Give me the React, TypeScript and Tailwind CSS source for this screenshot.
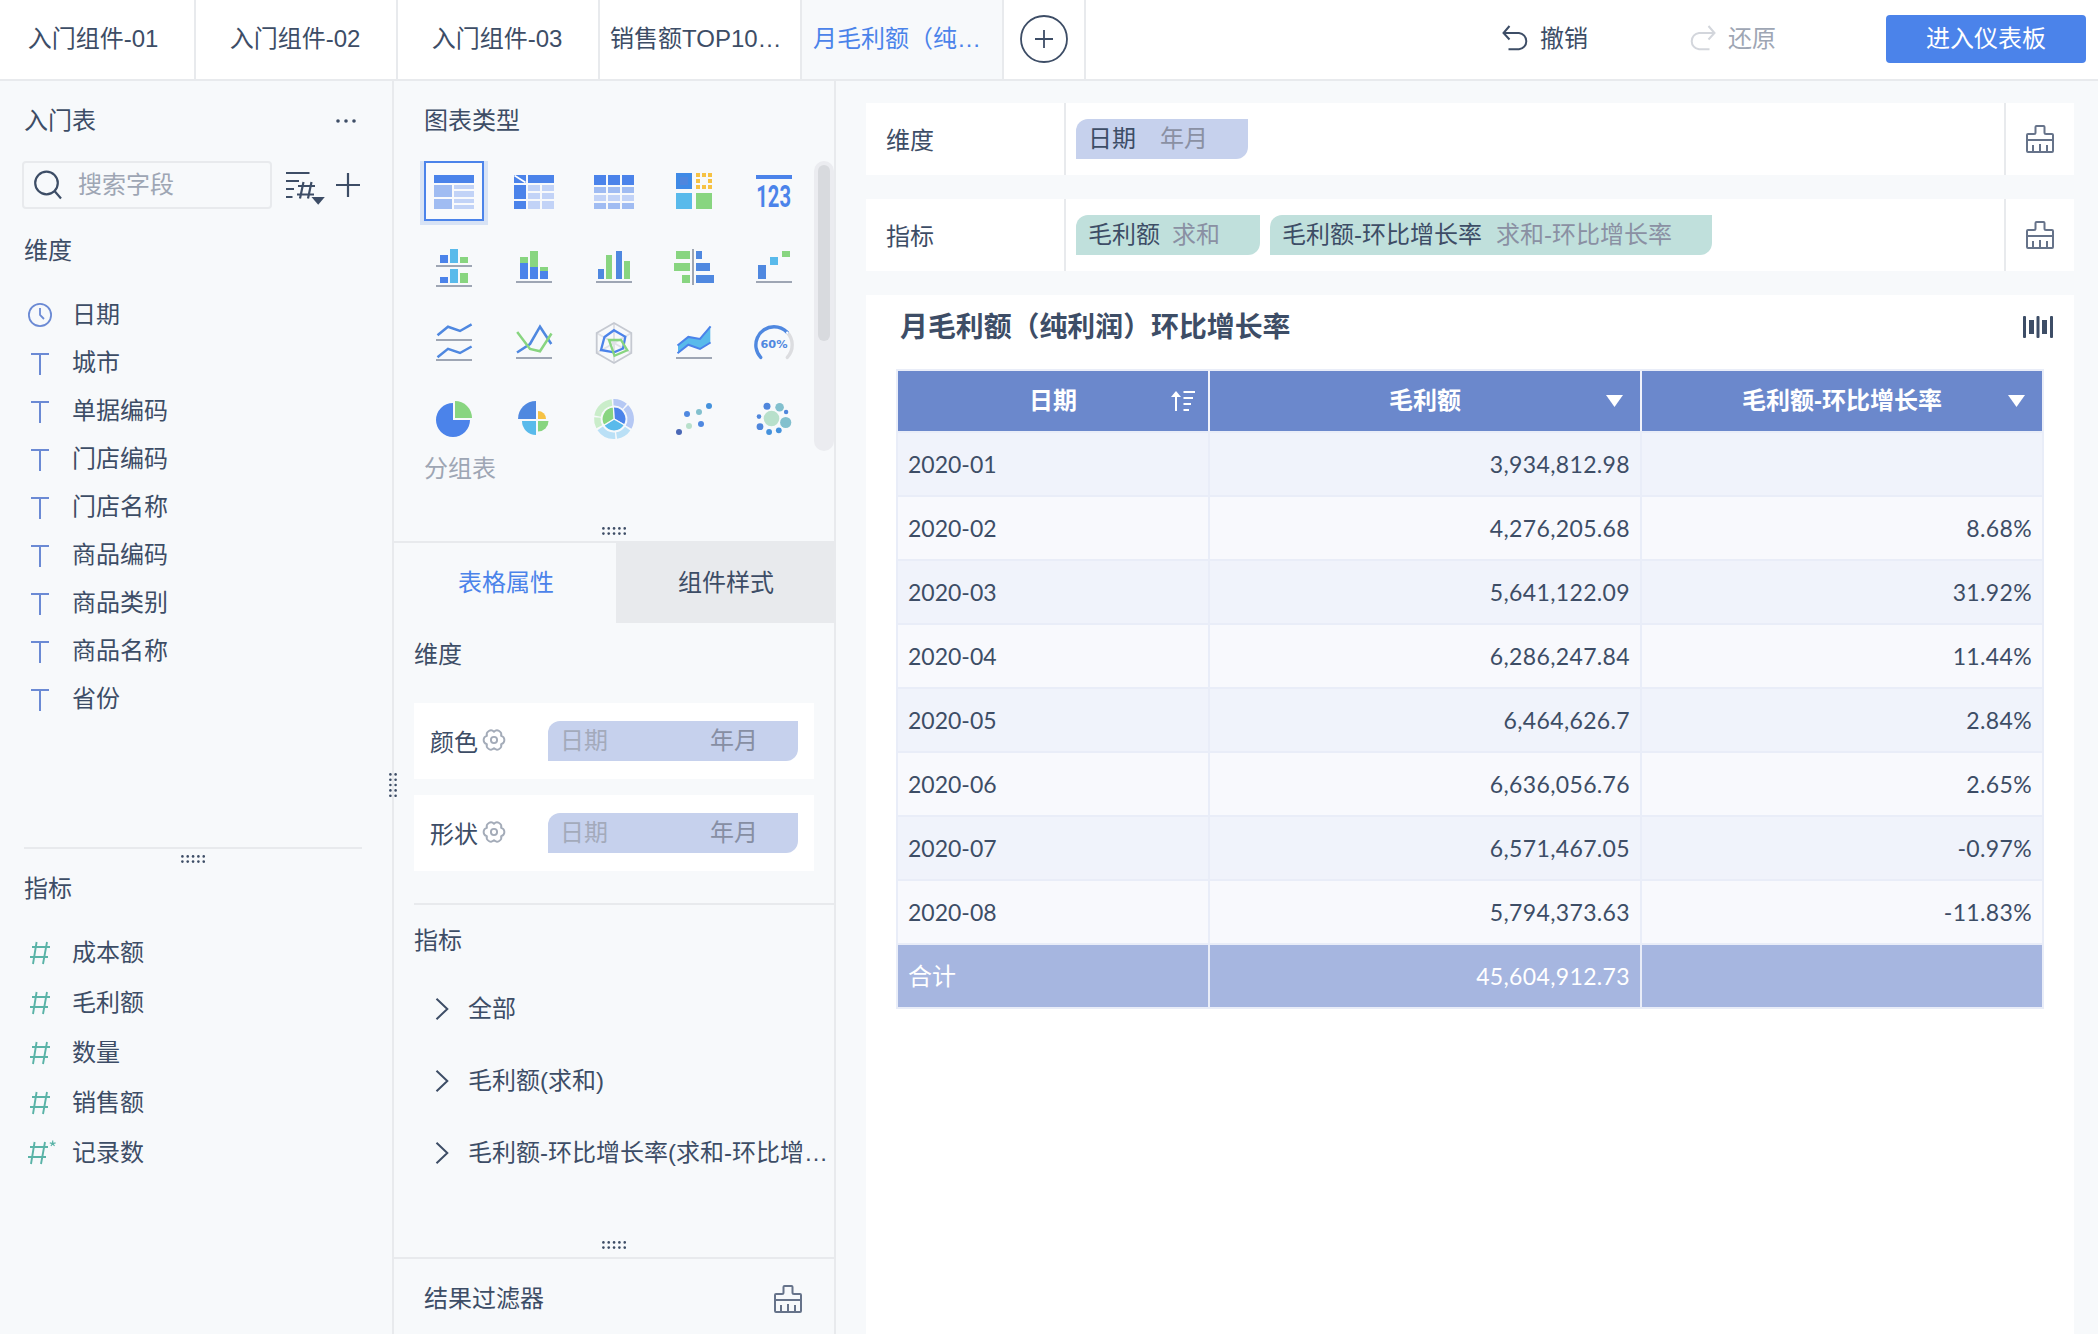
import React from "react";

const BLUE = "#4b83ea";
const MID = "#4f88e0";
const GREEN = "#88d580";
const SKY = "#59baeb";
const AXIS = "#9ea6b4";

type Box = [number, number, number, number, string];

function Boxes({ items }: { items: Box[] }) {
  return (
    <>
      {items.map(([x1, y1, x2, y2, fill], i) => (
        <rect key={i} x={x1} y={y1} width={x2 - x1} height={y2 - y1} fill={fill} />
      ))}
    </>
  );
}

function polar(r: number, deg: number) {
  const a = ((deg - 90) * Math.PI) / 180;
  return `${(30 + r * Math.cos(a)).toFixed(2)} ${(30 + r * Math.sin(a)).toFixed(2)}`;
}
const arc = (r: number, a: number, b: number) => `M${polar(r, a)}A${r} ${r} 0 0 1 ${polar(r, b)}`;
const wedge = (r: number, a: number, b: number) => `${arc(r, a, b)}L30 30Z`;

const L1 = "#a0bcf2";
const L2 = "#c2d3f7";

const chartIcons: React.ReactNode[] = [
  <Boxes
    items={[
      [10, 14, 50, 22, BLUE], [10, 24, 28, 36, L1], [10, 38, 28, 48, L1],
      [30, 24, 50, 28, L2], [30, 30, 50, 36, L2], [30, 38, 50, 42, L2], [30, 44, 50, 48, L2],
    ]}
  />,
  <>
    <Boxes
      items={[
        [10, 14, 22, 22, BLUE], [24, 14, 50, 22, BLUE], [10, 24, 22, 38, BLUE], [10, 40, 22, 48, BLUE],
        [24, 24, 36, 30, L2], [38, 24, 50, 30, L2], [24, 32, 36, 38, L2], [38, 32, 50, 38, L2],
        [24, 40, 36, 48, L2], [38, 40, 50, 48, L2],
      ]}
    />
    <path d="M10.5 14.5L21.5 21.5" stroke="#fff" strokeWidth="1.6" />
  </>,
  <Boxes
    items={[10, 24, 38].flatMap((x): Box[] => [
      [x, 14, x + 12, 24, BLUE], [x, 26, x + 12, 32, L1], [x, 34, x + 12, 40, L2], [x, 42, x + 12, 48, L1],
    ])}
  />,
  <Boxes
    items={[
      [12, 12, 28, 28, "#3f8ae6"], [16, 16, 24, 24, "#4f86de"], [12, 32, 28, 48, SKY], [32, 32, 48, 48, GREEN],
      [32, 12, 36, 16, "#f6c244"], [38, 12, 42, 16, "#f6c244"], [44, 12, 48, 16, "#f6c244"],
      [32, 18, 36, 22, "#f6c244"], [44, 18, 48, 22, "#f6c244"],
      [32, 24, 36, 28, "#f6c244"], [38, 24, 42, 28, "#f6c244"], [44, 24, 48, 28, "#f6c244"],
    ]}
  />,
  <>
    <Boxes items={[[12, 14, 48, 18, BLUE]]} />
    <text transform="translate(12.3 46) scale(0.65 1)" fontFamily="Roboto, sans-serif" fontWeight="700" fontSize="31" fill={BLUE}>
      123
    </text>
  </>,
  <Boxes
    items={[
      [16, 18, 24, 26, BLUE], [26, 12, 34, 26, SKY], [36, 20, 44, 26, GREEN], [12, 28, 48, 30, AXIS],
      [16, 40, 24, 46, BLUE], [26, 32, 34, 46, SKY], [36, 36, 44, 46, GREEN], [12, 48, 48, 50, AXIS],
    ]}
  />,
  <Boxes
    items={[
      [16, 20, 24, 26, GREEN], [16, 26, 24, 42, BLUE], [26, 14, 34, 30, GREEN], [26, 30, 34, 42, BLUE],
      [36, 30, 44, 34, GREEN], [36, 34, 44, 42, BLUE], [12, 44, 48, 46, AXIS],
    ]}
  />,
  <Boxes
    items={[
      [14, 32, 20, 42, MID], [22, 18, 28, 42, GREEN], [32, 14, 38, 42, MID], [40, 24, 46, 42, GREEN], [12, 44, 48, 46, AXIS],
    ]}
  />,
  <Boxes
    items={[
      [12, 14, 26, 22, GREEN], [10, 26, 26, 34, GREEN], [18, 38, 26, 46, GREEN], [28, 12, 30, 48, AXIS],
      [32, 14, 38, 22, MID], [32, 26, 46, 34, MID], [32, 38, 50, 46, MID],
    ]}
  />,
  <Boxes items={[[14, 28, 22, 42, MID], [26, 20, 34, 28, SKY], [38, 14, 46, 20, GREEN], [12, 44, 48, 46, AXIS]]} />,
  <>
    <g fill="none" stroke={MID} strokeWidth="2.5">
      <path d="M13.5 22.2L24 13.7L36 18L47.6 11.3" />
      <path d="M13.5 44.2L24 35.8L36 40L47.6 33.5" />
    </g>
    <Boxes items={[[12, 26, 48, 28, AXIS], [12, 46, 48, 48, AXIS]]} />
  </>,
  <>
    <g fill="none" strokeWidth="2.5">
      <path d="M13 39.5L26 31L36 13.7L47.3 31" stroke={MID} />
      <path d="M13.2 19L26 36L36 38.3L47.5 20.5" stroke={GREEN} />
    </g>
    <Boxes items={[[12, 44, 48, 46, AXIS]]} />
  </>,
  <g fill="none">
    <path d="M30 10V50M12.7 20L47.3 40M47.3 20L12.7 40" stroke="#dfe1e6" strokeWidth="2" />
    <path d="M30 10L47.3 20V40L30 50L12.7 40V20Z" stroke="#c5c9d1" strokeWidth="1.8" />
    <path d="M30 17.2L41.3 23.8L39 35.5L30 39.3L17 37L20.5 24Z" stroke={BLUE} strokeWidth="2.3" />
    <path d="M25 27H37L43.3 37.3L30.5 42.7Z" stroke={GREEN} strokeWidth="2.3" />
  </g>,
  <>
    <path d="M14 32L24.3 23.7L36 26L46.3 14V29.7L36 36L24.3 31.7L14 40Z" fill={SKY} />
    <path d="M13.5 32.5L24.3 23.9L36 26L46.6 13.3M13.5 40.3L24.3 31.7L36 36L46.6 29.5" fill="none" stroke={BLUE} strokeWidth="2" />
    <Boxes items={[[12, 44, 48, 46, AXIS]]} />
  </>,
  <>
    <path d="M43.1 19.3A18.3 18.3 0 0 1 43.3 44.4" fill="none" stroke="#dcdde0" strokeWidth="3.4" strokeLinecap="round" />
    <path d="M16.7 44.4A18.3 18.3 0 0 1 30 13.7A18.3 18.3 0 0 1 43.1 19.3" fill="none" stroke={MID} strokeWidth="3.4" strokeLinecap="round" />
    <circle cx="43.3" cy="19.8" r="1.3" fill="#fff" />
    <text x="30" y="35.2" textAnchor="middle" fontFamily="'DejaVu Sans', sans-serif" fontWeight="700" fontSize="10.5" fill={MID} textLength="27" lengthAdjust="spacingAndGlyphs">
      60%
    </text>
  </>,
  <>
    <path d="M29 14A17 17 0 1 0 46 31H29Z" fill={BLUE} />
    <path d="M31 12A17 17 0 0 1 48 29H31Z" fill={GREEN} />
  </>,
  <>
    <path d="M32 12A18 18 0 0 0 14 30H32Z" fill={MID} />
    <path d="M34 22A8 8 0 0 1 42 30H34Z" fill="#f6c244" />
    <path d="M32 46A14 14 0 0 1 18 32H32Z" fill={SKY} />
    <path d="M34 42.5A10.5 10.5 0 0 0 44.5 32H34Z" fill={GREEN} />
  </>,
  <>
    <g fill="none" strokeWidth="6.5">
      <path d={arc(16.7, -2, 40)} stroke="#b5c8f4" />
      <path d={arc(16.7, 45, 119)} stroke="#b5c8f4" />
      <path d={arc(16.7, 125, 171)} stroke="#bae0f6" />
      <path d={arc(16.7, 176, 236)} stroke="#bae0f6" />
      <path d={arc(16.7, 242, 275)} stroke="#caedca" />
      <path d={arc(16.7, 280, 353)} stroke="#caedca" />
    </g>
    <g stroke="#f7f9fb" strokeWidth="1.2">
      <path d={wedge(12, -3, 120)} fill={BLUE} />
      <path d={wedge(12, 120, 238)} fill={SKY} />
      <path d={wedge(12, 238, 357)} fill={GREEN} />
    </g>
  </>,
  <>
    <circle cx="15" cy="43" r="3" fill="#4a68b6" />
    <circle cx="25" cy="37" r="3" fill="#b8e0cb" />
    <circle cx="23" cy="25" r="3" fill={MID} />
    <circle cx="35" cy="23" r="3" fill="#82c0ce" />
    <circle cx="37" cy="35" r="3" fill={MID} />
    <circle cx="45" cy="17" r="3" fill="#4592dc" />
  </>,
  <>
    <circle cx="27.5" cy="29.5" r="7.8" fill="#b8e0cb" />
    <circle cx="41.7" cy="33.5" r="5.6" fill="#82c0ce" />
    <circle cx="35.6" cy="18.3" r="4.3" fill="#82c0ce" />
    <circle cx="23" cy="17.3" r="3.5" fill="#4f86dc" />
    <circle cx="42.1" cy="23" r="2.2" fill="#4f86dc" />
    <circle cx="15" cy="27.6" r="2.3" fill="#4f86dc" />
    <circle cx="16" cy="37.7" r="3.4" fill="#4f86dc" />
    <circle cx="25.1" cy="43" r="2.9" fill="#4592dc" />
    <circle cx="34.8" cy="41.3" r="2.9" fill="#4592dc" />
  </>,
];

function Brush() {
  return (
    <svg width="28" height="28" viewBox="0 0 28 28" fill="none" stroke="#66738a" strokeWidth="2" strokeLinejoin="round">
      <path d="M1 10Q1 9 2 9H8Q9.5 9 9.5 7.5V2Q9.5 1 10.5 1H17.5Q18.5 1 18.5 2V7.5Q18.5 9 20 9H26Q27 9 27 10V26Q27 27 26 27H2Q1 27 1 26Z" />
      <path d="M1 15H27M7 20V27M14 19V27M21 20V27" />
    </svg>
  );
}

function Handle({ vertical = false }: { vertical?: boolean }) {
  const w = vertical ? 8 : 24;
  const h = vertical ? 24 : 8;
  return (
    <svg width={w} height={h} viewBox={`0 0 ${w} ${h}`} fill="#3d4d66">
      {[0, 1, 2, 3, 4].flatMap((i) =>
        [0, 1].map((j) => {
          const a = 1.4 + i * 5.33;
          const b = 1.4 + j * 5.2;
          return <circle key={`${i}${j}`} cx={vertical ? b : a} cy={vertical ? a : b} r="1.3" />;
        }),
      )}
    </svg>
  );
}

function Gear() {
  return (
    <svg width="24" height="24" viewBox="-12 -12 24 24" fill="none" stroke="#a3abb8" strokeWidth="1.9" strokeLinejoin="round">
      <path d="M0 -8.2A4.2 4.2 0 0 1 7.1 -4.1A4.2 4.2 0 0 1 7.1 4.1A4.2 4.2 0 0 1 0 8.2A4.2 4.2 0 0 1 -7.1 4.1A4.2 4.2 0 0 1 -7.1 -4.1A4.2 4.2 0 0 1 0 -8.2Z" />
      <circle r="3.1" />
    </svg>
  );
}

function Hash({ star = false }: { star?: boolean }) {
  return (
    <svg className={star ? "-ml-[2px] mr-[2px]" : ""} width="24" height="24" viewBox="0 0 24 24" overflow="visible" fill="none" stroke="#5ab3a7" strokeWidth="1.9">
      <path d="M8.6 1L5 23M19 1L15 23M4 6H22M2 16H20" />
      {star && <path d="M26.7 -0.6V2.6M23.8 1.8L26.7 2.6L29.6 1.8M24.9 5L26.7 2.6L28.5 5" strokeWidth="1.2" />}
    </svg>
  );
}

const tabs = [
  { label: "入门组件-01", cls: "w-[196px] pr-[8px] justify-center" },
  { label: "入门组件-02", cls: "w-[202px] pr-[2px] justify-center" },
  { label: "入门组件-03", cls: "w-[202px] pr-[2px] justify-center" },
  { label: "销售额TOP10…", cls: "w-[202px] pl-[10px]" },
  { label: "月毛利额（纯…", cls: "w-[202px] pl-[11px] bg-[#f7f9fb] text-[#4b83ea]" },
];

const dims = ["日期", "城市", "单据编码", "门店编码", "门店名称", "商品编码", "商品类别", "商品名称", "省份"];
const measures = ["成本额", "毛利额", "数量", "销售额", "记录数"];
const rows = [
  ["2020-01", "3,934,812.98", ""],
  ["2020-02", "4,276,205.68", "8.68%"],
  ["2020-03", "5,641,122.09", "31.92%"],
  ["2020-04", "6,286,247.84", "11.44%"],
  ["2020-05", "6,464,626.7", "2.84%"],
  ["2020-06", "6,636,056.76", "2.65%"],
  ["2020-07", "6,571,467.05", "-0.97%"],
  ["2020-08", "5,794,373.63", "-11.83%"],
];

function TopBar() {
  return (
    <header className="flex h-[81px] shrink-0 border-b-2 border-[#e8eaed] bg-white">
      {tabs.map((t) => (
        <div key={t.label} className={`flex h-[79px] shrink-0 items-center whitespace-nowrap border-r-2 border-[#e8eaed] pb-[2px] ${t.cls}`}>
          {t.label}
        </div>
      ))}
      <div className="flex w-[82px] items-center justify-center border-r-2 border-[#e8eaed] pb-[1px]">
        <svg width="48" height="48" viewBox="0 0 48 48" fill="none" stroke="#3d4d66" strokeWidth="1.8">
          <circle cx="24" cy="24" r="23" />
          <path d="M15 24H33M24 15V33" />
        </svg>
      </div>
      <div className="ml-auto flex items-center pb-[2px] pr-3">
        <svg className="-mt-[1px]" width="27" height="26" viewBox="0 0 27 26" fill="none" stroke="#3d4d66" strokeWidth="2">
          <path d="M8.5 1L2.5 8L8.5 14.5M2.5 8H18A8.2 8.2 0 0 1 18 24.3H7.5" />
        </svg>
        <span className="ml-[12px]">撤销</span>
        <svg className="-mt-[1px] ml-[101px]" width="27" height="26" viewBox="0 0 27 26" fill="none" stroke="#d3d6dc" strokeWidth="2">
          <path d="M19.5 1L25.5 8L19.5 14.5M25.5 8H10A8.2 8.2 0 0 0 10 24.3H20.5" />
        </svg>
        <span className="ml-[12px] text-[#9ea6b4]">还原</span>
        <button className="ml-[110px] mt-[1px] h-12 w-[200px] rounded bg-[#4b83ea] text-white">进入仪表板</button>
      </div>
    </header>
  );
}

function FieldPanel() {
  return (
    <aside className="relative flex w-[394px] shrink-0 flex-col border-r-2 border-[#e8eaed]">
      <div className="flex h-20 items-center justify-between pl-6 pr-9">
        <span>入门表</span>
        <svg width="20" height="4" viewBox="0 0 20 4" fill="#3d4d66">
          <circle cx="2" cy="2" r="1.8" />
          <circle cx="10" cy="2" r="1.8" />
          <circle cx="18" cy="2" r="1.8" />
        </svg>
      </div>
      <div className="flex h-12 items-center pl-[22px]">
        <div className="flex h-12 w-[250px] items-center rounded border-2 border-[#e8eaed] pl-[10px] text-[#9ea6b4]">
          <svg width="28" height="30" viewBox="0 0 28 30" fill="none" stroke="#3d4d66" strokeWidth="2.2">
            <circle cx="12.5" cy="13" r="11.3" />
            <path d="M20.5 21L27 28.5" />
          </svg>
          <span className="ml-[16px]">搜索字段</span>
        </div>
        <svg className="ml-[14px] mt-[5px]" width="39" height="34" viewBox="0 0 39 34" fill="none" stroke="#3d4d66" strokeWidth="2.2">
          <path d="M0 2H23.5M0 10H13M0 18H8M0 26H6.5" />
          <path d="M17.5 11L14 27.5M25.5 11L22 27.5M12 15H29M11 23.5H28" />
          <path d="M25.5 26H38.8L32.2 33.8Z" fill="#3d4d66" stroke="none" />
        </svg>
        <svg className="ml-[11px]" width="24" height="24" viewBox="0 0 24 24" fill="none" stroke="#3d4d66" strokeWidth="2.2">
          <path d="M0 12H24M12 0V24" />
        </svg>
      </div>
      <div className="flex h-[82px] items-center pl-6 pt-[2px]">维度</div>
      <ul>
        {dims.map((d, i) => (
          <li key={d} className="flex h-12 items-center pl-7">
            {i === 0 ? (
              <svg width="24" height="24" viewBox="0 0 24 24" fill="none" stroke="#6b8ad4" strokeWidth="1.8">
                <circle cx="12" cy="12" r="11.1" />
                <path d="M12 5V12L16 16" />
              </svg>
            ) : (
              <svg width="24" height="24" viewBox="0 0 24 24" fill="none" stroke="#6b8ad4" strokeWidth="2">
                <path d="M3 3H21M12 3V24" />
              </svg>
            )}
            <span className="ml-5">{d}</span>
          </li>
        ))}
      </ul>
      <div className="ml-6 mr-[30px] mt-[124px] h-[2px] bg-[#e8eaed]" />
      <div className="flex h-5 items-center justify-center pr-[6px]">
        <Handle />
      </div>
      <div className="flex h-10 items-center pl-6">指标</div>
      <ul className="mt-[19px]">
        {measures.map((m, i) => (
          <li key={m} className="flex h-[50px] items-center pl-7">
            <Hash star={i === 4} />
            <span className="ml-5">{m}</span>
          </li>
        ))}
      </ul>
      <div className="absolute -right-[5px] top-[692px]">
        <Handle vertical />
      </div>
    </aside>
  );
}

function StyleCard({ label }: { label: string }) {
  return (
    <div className="flex h-[76px] items-center bg-white px-4">
      <span className="pt-[3px]">{label}</span>
      <span className="ml-1 -mt-[2px]">
        <Gear />
      </span>
      <div className="ml-auto flex h-10 w-[250px] items-center rounded-tl-[12px] rounded-br-[12px] bg-[#c6d1ed] pl-3">
        <span className="w-[150px] text-[#a3aabb]">日期</span>
        <span className="text-[#868ea3]">年月</span>
      </div>
    </div>
  );
}

function ConfigPanel() {
  return (
    <section className="flex w-[442px] shrink-0 flex-col border-r-2 border-[#e8eaed]">
      <div className="flex h-20 items-center pl-[30px]">图表类型</div>
      <div className="flex h-[290px] justify-between pl-[30px]">
        <div className="grid h-[288px] grid-cols-5 gap-x-5 gap-y-4">
          {chartIcons.map((icon, i) => (
            <div key={i} className={i === 0 ? "size-[60px] shadow-[4px_4px_0_0_#d8e3f5,-4px_4px_0_0_#d8e3f5,4px_0_0_0_#d8e3f5,-4px_0_0_0_#d8e3f5]" : "size-[60px]"}>
              <svg width="60" height="60" viewBox="0 0 60 60">
                {i === 0 && <rect x="1" y="1" width="58" height="58" fill="#f9fafc" stroke={BLUE} strokeWidth="2" />}
                {icon}
              </svg>
            </div>
          ))}
        </div>
        <div className="w-5 rounded-full bg-[#ebecf0] p-1">
          <div className="h-[176px] rounded-full bg-[#d8dade]" />
        </div>
      </div>
      <div className="flex h-9 items-center pl-[30px] text-[#9ea6b4]">分组表</div>
      <div className="mt-10 flex h-[14px] justify-center">
        <Handle />
      </div>
      <div className="flex h-[82px]">
        <div className="flex w-[222px] items-center justify-center border-t-2 border-[#e8eaed] pl-[2px] text-[#4b83ea]">表格属性</div>
        <div className="flex w-[218px] items-center justify-center bg-[#e8eaed] pl-[2px] pt-[2px]">组件样式</div>
      </div>
      <div className="flex h-16 items-center pl-5">维度</div>
      <div className="ml-5 mt-4 flex w-[400px] flex-col gap-4">
        <StyleCard label="颜色" />
        <StyleCard label="形状" />
      </div>
      <div className="ml-5 mt-8 h-[2px] bg-[#e8eaed]" />
      <div className="flex h-[68px] items-center pl-5 pt-[4px]">指标</div>
      <ul>
        {["全部", "毛利额(求和)", "毛利额-环比增长率(求和-环比增…"].map((t) => (
          <li key={t} className="flex h-[72px] items-center whitespace-nowrap pl-[41px]">
            <svg className="shrink-0" width="14" height="22" viewBox="0 0 14 22" fill="none" stroke="#3d4d66" strokeWidth="2">
              <path d="M1.5 0.8L12.3 11L1.5 21.2" />
            </svg>
            <span className="ml-[19px]">{t}</span>
          </li>
        ))}
      </ul>
      <div className="mt-[52px] flex h-4 justify-center">
        <Handle />
      </div>
      <div className="flex flex-1 items-center justify-between border-t-2 border-[#e8eaed] pl-[30px] pr-8 pb-1">
        <span className="pt-2">结果过滤器</span>
        <span className="pt-2">
          <Brush />
        </span>
      </div>
    </section>
  );
}

function Shelf({ label, children }: { label: string; children: React.ReactNode }) {
  return (
    <div className="flex h-[72px] shrink-0 bg-white">
      <div className="flex w-[200px] items-center border-r-2 border-[#e8eaed] pl-5 pt-[4px]">{label}</div>
      <div className="flex flex-1 gap-[10px] pl-[10px] pt-4">{children}</div>
      <div className="flex w-[70px] items-center justify-center border-l-2 border-[#e8eaed]">
        <Brush />
      </div>
    </div>
  );
}

function Pill({ name, agg, cls }: { name: string; agg: string; cls: string }) {
  return (
    <div className={`flex h-10 items-center whitespace-nowrap rounded-tl-[12px] rounded-br-[12px] pl-3 ${cls}`}>
      <span>{name}</span>
      <span className="text-[#8a90a3]">{agg}</span>
    </div>
  );
}

const Down = () => (
  <svg width="17" height="12" viewBox="0 0 17 12" fill="#fff">
    <path d="M0 0H17L8.5 12Z" />
  </svg>
);

const cols = "grid grid-cols-[310px_430px_400px] gap-x-[2px]";

function Report() {
  return (
    <div className="flex flex-1 flex-col bg-white pl-[30px] pr-[30px]">
      <div className="flex h-[74px] items-center pl-1 pb-[9px] text-[27.9px] font-bold">
        月毛利额（纯利润）环比增长率
        <svg className="-mr-[9px] -mt-[1px] ml-auto" width="30" height="22" viewBox="0 0 30 22" fill="#3d4d66">
          <rect x="0" y="0" width="3" height="22" rx="1" />
          <rect x="6" y="4" width="5" height="14" />
          <rect x="13.5" y="0" width="3" height="22" rx="1" />
          <rect x="19" y="4" width="5" height="14" />
          <rect x="27" y="0" width="3" height="22" rx="1" />
        </svg>
      </div>
      <div className="w-[1148px] bg-[#e9edf8] p-[2px]">
        <div className={`${cols} h-[60px] bg-[#f1f3fb] font-bold text-white`}>
          {["日期", "毛利额", "毛利额-环比增长率"].map((h, i) => (
            <div key={h} className="relative flex items-center justify-center bg-[#6b88cc] pb-[1px]">
              {h}
              {i === 0 ? (
                <svg className="absolute right-[13px] top-5" width="24" height="20" viewBox="0 0 24 20" fill="none" stroke="#fff" strokeWidth="2">
                  <path d="M5 4V20M12.5 1H24M12.5 7H22M12.5 13H20M12.5 19H18" />
                  <path d="M0 6L5 0L10 6Z" fill="#fff" stroke="none" />
                </svg>
              ) : (
                <span className="absolute right-[17px] top-6">
                  <Down />
                </span>
              )}
            </div>
          ))}
        </div>
        <div className="mt-[2px] flex flex-col gap-[2px] font-[Lato,'Noto_Sans_CJK_SC',sans-serif]">
          {rows.map((r, i) => (
            <div key={r[0]} className={`${cols} h-[62px]`}>
              {r.map((c, j) => (
                <div
                  key={j}
                  className={`flex items-center px-[10px] text-[23px] ${i % 2 ? "bg-[#f8f9fd]" : "bg-[#f0f3fb]"} ${j ? "justify-end tracking-[0.35px]" : ""}`}
                >
                  {c}
                </div>
              ))}
            </div>
          ))}
          <div className={`${cols} h-[62px] text-white`}>
            <div className="flex items-center bg-[#a6b6e0] px-[10px]">合计</div>
            <div className="flex items-center justify-end bg-[#a6b6e0] px-[10px] text-[23px] tracking-[0.35px]">45,604,912.73</div>
            <div className="bg-[#a6b6e0]" />
          </div>
        </div>
      </div>
    </div>
  );
}

export default function App() {
  return (
    <div className="flex h-[1334px] w-[2098px] flex-col overflow-hidden bg-[#f7f9fb] font-['Liberation_Sans','Noto_Sans_CJK_SC',sans-serif] text-[24px] leading-none text-[#3d4d66]">
      <TopBar />
      <div className="flex min-h-0 flex-1">
        <FieldPanel />
        <ConfigPanel />
        <main className="flex min-w-0 flex-1 flex-col gap-6 pl-[30px] pr-6 pt-[22px]">
          <Shelf label="维度">
            <Pill name="日期" agg="年月" cls="w-[172px] gap-6 bg-[#c6d1ed]" />
          </Shelf>
          <Shelf label="指标">
            <Pill name="毛利额" agg="求和" cls="w-[184px] gap-[12px] bg-[#c0e0dc]" />
            <Pill name="毛利额-环比增长率" agg="求和-环比增长率" cls="w-[442px] gap-[14px] bg-[#c0e0dc]" />
          </Shelf>
          <Report />
        </main>
      </div>
    </div>
  );
}
